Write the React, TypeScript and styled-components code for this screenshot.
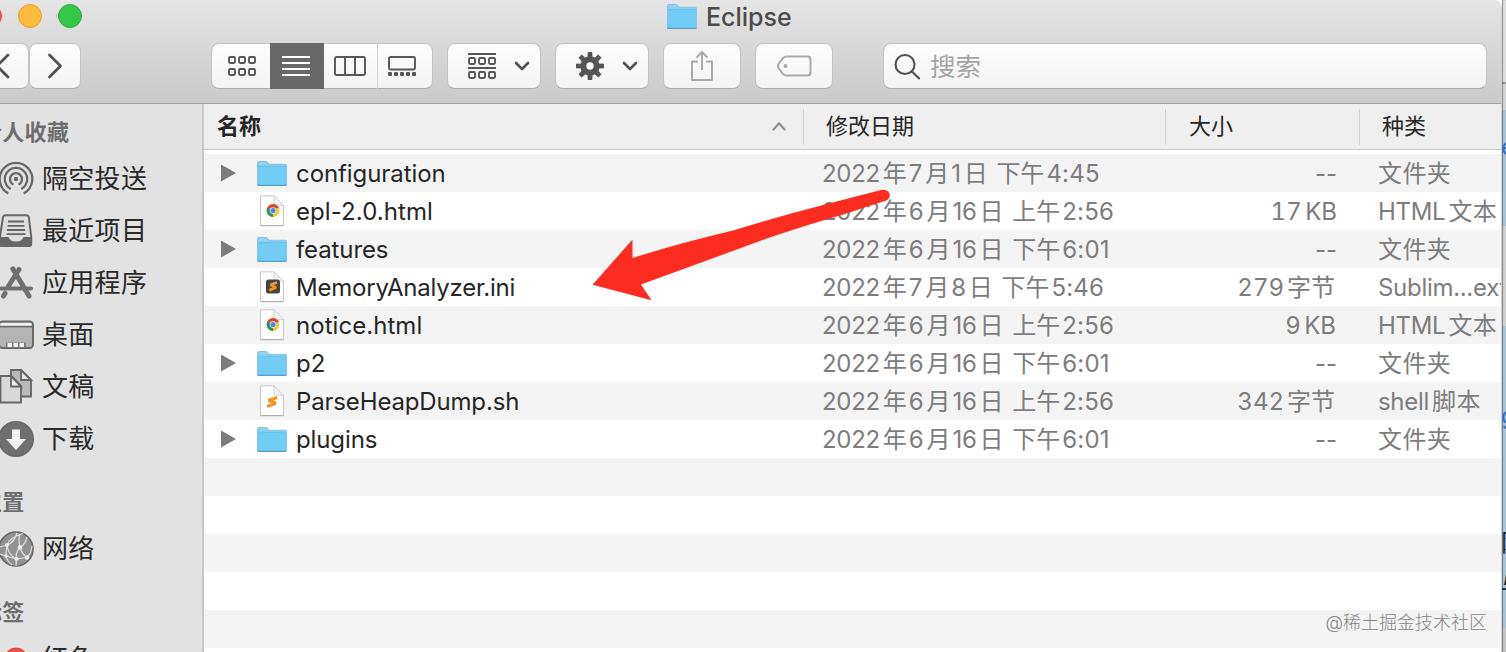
import React from 'react';
import styled, { createGlobalStyle } from 'styled-components';

const GlobalStyle = createGlobalStyle`
  * { box-sizing: border-box; }
  body { margin: 0; overflow: hidden; }
`;

const Desktop = styled.div`
  position: relative;
  display: flex;
  width: 1506px;
  height: 652px;
  overflow: hidden;
  font-family: Inter, 'Noto Sans CJK SC', sans-serif;
  color: #262626;
`;

const Window = styled.div`
  display: flex;
  flex-direction: column;
  width: 1502px;
  flex: none;
  height: 652px;
  overflow: hidden;
  border-top-right-radius: 8px;
  border-right: 1px solid #d2d2d2;
`;

const Behind = styled.div`
  width: 4px;
  height: 652px;
  overflow: hidden;
  white-space: nowrap;
  background: linear-gradient(#dedede 0 82px, #9a9a9a 82px 84px, #d4d4d4 84px 110px, #a9c3d6 110px 226px, #cfcfcf 226px 326px, #a9c3d9 326px 628px, #c4c4c4 628px);
  box-shadow: inset 1px 0 1px rgba(0, 0, 0, 0.35);
`;

const Fragment = styled.div<{ $gap: number; $color: string; $shift: number }>`
  margin-top: ${p => p.$gap}px;
  margin-left: ${p => p.$shift}px;
  height: 30px;
  line-height: 30px;
  font-size: 24px;
  color: ${p => p.$color};
`;

const TitleArea = styled.header`
  height: 104px;
  flex: none;
  display: flex;
  flex-direction: column;
  background: linear-gradient(#e5e5e5, #cacaca);
  border-bottom: 1px solid #a2a2a2;
`;

const TitleBar = styled.div`
  height: 43px;
  display: flex;
  align-items: flex-start;
`;

const Lights = styled.div`
  display: flex;
  gap: 16px;
  margin: 4px 0 0 -22px;
`;

const Light = styled.span<{ $fill: string; $edge: string }>`
  width: 24px;
  height: 24px;
  border-radius: 50%;
  background: ${p => p.$fill};
  border: 1px solid ${p => p.$edge};
`;

const Title = styled.div`
  display: flex;
  align-items: center;
  gap: 9px;
  height: 33px;
  margin-left: 585px;
  font-size: 25px;
  font-weight: 500;
  letter-spacing: 0;
  color: #4b4b4b;
`;

const Toolbar = styled.div`
  display: flex;
  align-items: center;
  height: 46px;
`;

const Button = styled.div<{ $w: number; $ml?: number }>`
  width: ${p => p.$w}px;
  height: 46px;
  margin-left: ${p => p.$ml ?? 0}px;
  display: flex;
  flex: none;
  align-items: center;
  justify-content: center;
  background: linear-gradient(#fdfdfd, #f4f4f4);
  border: 1px solid #c3c3c3;
  border-bottom-color: #adadad;
  border-radius: 8px;
`;

const Segmented = styled.div`
  display: flex;
  height: 46px;
  width: 222px;
  margin-left: 130px;
  border: 1px solid #c3c3c3;
  border-bottom-color: #adadad;
  border-radius: 8px;
  background: linear-gradient(#fdfdfd, #f4f4f4);
`;

const Segment = styled.div<{ $w: number; $active?: boolean; $line?: boolean; $right?: number; $left?: number }>`
  width: ${p => p.$w}px;
  display: flex;
  align-items: center;
  justify-content: center;
  margin: -1px 0;
  padding: 0 ${p => p.$right ?? 0}px 0 ${p => p.$left ?? 0}px;
  background: ${p => (p.$active ? '#686868' : 'transparent')};
  border-left: ${p => (p.$line ? '1px solid #d4d4d4' : '0')};
`;

const Search = styled(Button)`
  justify-content: flex-start;
  padding-left: 10px;
  gap: 9px;
  font-size: 25.5px;
  color: #a5a5a5;
`;

const Placeholder = styled.span`
  padding-bottom: 3px;
`;

const Body = styled.div`
  flex: 1;
  display: flex;
  min-height: 0;
`;

const Sidebar = styled.aside`
  width: 204px;
  flex: none;
  overflow: hidden;
  background: #e2e2e2;
  border-right: 2px solid #c9c9c9;
  white-space: nowrap;
`;

const GroupTitle = styled.div<{ $gap: number }>`
  margin: ${p => p.$gap}px 0 0 -20px;
  height: 41px;
  line-height: 41px;
  font-size: 22px;
  font-weight: 700;
  letter-spacing: 0.3px;
  color: #6d6d6d;
`;

const Place = styled.div`
  display: flex;
  align-items: center;
  gap: 8px;
  height: 52px;
  margin-left: -2px;
  font-size: 26px;
  line-height: 38px;
  letter-spacing: 0.3px;
  color: #2a2a2a;
`;

const Files = styled.main`
  flex: 1;
  min-width: 0;
  background: #fff;
`;

const columns = '599px 362px 194px 1fr';

const HeaderRow = styled.div`
  display: grid;
  grid-template-columns: ${columns};
  align-items: center;
  height: 46px;
  margin-bottom: 4px;
  background: #efefef;
  border-bottom: 1px solid #cccccc;
`;

const HeaderCell = styled.div<{ $pad: number; $bold?: boolean }>`
  display: flex;
  align-items: center;
  justify-content: space-between;
  height: 36px;
  padding: 0 16px 0 ${p => p.$pad}px;
  font-size: 22px;
  font-weight: ${p => (p.$bold ? 700 : 400)};
  border-left: ${p => (p.$bold ? '0' : '1px solid #d2d2d2')};
  white-space: nowrap;
`;

const HeaderLabel = styled.span`
  padding-bottom: 6px;
`;

const Row = styled.div<{ $shade: boolean }>`
  display: grid;
  grid-template-columns: ${columns};
  align-items: center;
  height: 38px;
  line-height: 36px;
  background: ${p => (p.$shade ? '#f4f4f4' : '#fff')};
  white-space: nowrap;
  font-size: 24px;
  color: #7d7d7d;
`;

const NameCell = styled.div`
  display: flex;
  align-items: center;
  height: 38px;
`;

const Disclosure = styled.div`
  width: 37px;
  margin-left: 16px;
  display: flex;
`;

const IconBox = styled.div`
  width: 30px;
  display: flex;
  justify-content: center;
  margin-right: 9px;
`;

const FileName = styled.span<{ $ls: number }>`
  padding-top: 2px;
  color: #262626;
  letter-spacing: ${p => p.$ls}px;
`;

const DateCell = styled.div`
  padding: 2px 0 0 19px;
`;
const SizeCell = styled.div<{ $inset: number; $tabular: boolean }>`
  text-align: right;
  padding: 2px ${p => p.$inset}px 0 0;
  word-spacing: -3px;
  font-variant-numeric: ${p => (p.$tabular ? 'tabular-nums' : 'normal')};
`;
const KindCell = styled.div`
  padding: 2px 0 0 19px;
  overflow: hidden;
`;

const Han = styled.span<{ $lead: boolean; $trail: boolean; $ls: number }>`
  margin-left: ${p => (p.$lead ? 3 : 0)}px;
  margin-right: ${p => (p.$trail ? 2 : 0)}px;
  letter-spacing: ${p => p.$ls}px;
`;
const Latin = styled.span<{ $ls: number }>`
  letter-spacing: ${p => p.$ls}px;
`;

const Arrow = styled.svg`
  position: absolute;
  left: 590px;
  top: 186px;
`;

const Watermark = styled.div`
  position: absolute;
  right: 19px;
  top: 609px;
  line-height: 28px;
  font-size: 18px;
  font-weight: 300;
  letter-spacing: 0px;
  color: #858585;
`;

/* Adds a little air where Chinese and Latin runs meet. */
const Mixed = ({ text, ls = -0.3, hanLs = 0 }: { text: string; ls?: number; hanLs?: number }) => {
  const parts = text.match(/[\u4e00-\u9fff]+|[^\u4e00-\u9fff]+/g) ?? [];
  return (
    <>
      {parts.map((part, i) =>
        /[\u4e00-\u9fff]/.test(part) ? (
          <Han key={i} $ls={hanLs} $lead={i > 0 && parts[i - 1] !== ' '} $trail={i < parts.length - 1 && parts[i + 1] !== ' '}>
            {part}
          </Han>
        ) : (
          <Latin key={i} $ls={part === ' ' ? 2 : part.includes(':') ? 0.2 : ls}>{part}</Latin>
        ),
      )}
    </>
  );
};

const FolderIcon = () => (
  <svg width="30" height="25" viewBox="0 0 30 25">
    <path d="M.5 2Q.5.5 2 .5h7q1 0 1.600.8l1.400 2H28.500q1 0 1 1V23H.5z" fill="#8fd3f3" stroke="#74bce0" strokeWidth=".8" />
    <path d="M.5 5.500h29V23q0 1-1 1h-27q-1 0-1-1z" fill="#72cdf6" />
    <path d="M.8 5.300h28.400" stroke="#62b7e2" strokeWidth=".8" />
    <path d="M.5 23.500q0 .8 1 .8h27q1 0 1-.8" fill="none" stroke="#579fc6" strokeWidth="1.300" />
  </svg>
);

const PageIcon = ({ kind }: { kind: string }) => (
  <svg width="26" height="32" viewBox="0 0 26 32">
    <path d="M1.500.8H15l9.500 9.700V30.500h-23z" fill="#fff" stroke="#c6c6c6" />
    <path d="M15 .8V8q0 2.300 2.300 2.300h7.200z" fill="#f4f4f4" stroke="#cfcfcf" strokeWidth=".9" />
    <path d="M1.500 30.700h23" stroke="#ababab" />
    {kind === 'chrome' && (
      <g>
        <circle cx="14" cy="15.500" r="6.400" fill="#f6c631" />
        <path d="M14 15.500L8.460 12.300A6.400 6.400 0 0 1 19.540 12.300z" fill="#dc4437" />
        <path d="M14 15.500L8.460 12.300A6.400 6.400 0 0 0 14 21.900z" fill="#27985a" />
        <path d="M14 12.300h5.540" stroke="#dc4437" strokeWidth="1.500" />
        <circle cx="14" cy="15.500" r="3.200" fill="#fff" />
        <circle cx="14" cy="15.500" r="2.600" fill="#4b83ee" />
      </g>
    )}
    {kind === 'sublime' && (
      <g>
        <rect x="7" y="8.500" width="14" height="14" rx="2.500" fill="#464646" />
        <path d="M18 11.500L11.500 13.700L17 16.600L10.300 19.200" fill="none" stroke="#f79428" strokeWidth="2.700" strokeLinejoin="bevel" />
      </g>
    )}
    {kind === 'shell' && (
      <path d="M18.200 12.500L9.500 15.200L16.800 18.300L8 21.500" fill="none" stroke="#f79428" strokeWidth="3.200" strokeLinejoin="bevel" />
    )}
  </svg>
);

const grid = (y: number) => [0, 10, 20].map(x => <rect key={`${x}-${y}`} x={x + 1} y={y} width="6" height="6" rx="1.200" />);

const GridIcon = () => (
  <svg width="28" height="20" viewBox="0 0 28 20" fill="none" stroke="#575757" strokeWidth="1.900">{grid(1)}{grid(13)}</svg>
);
const GroupIcon = () => (
  <svg width="28" height="26" viewBox="0 0 28 26" fill="none" stroke="#575757" strokeWidth="1.900">
    <path d="M0 1h28M0 15h28" />{grid(5)}{grid(19)}
  </svg>
);
const ListIcon = () => (
  <svg width="28" height="20" viewBox="0 0 28 20" stroke="#fff" strokeWidth="2"><path d="M0 1h28M0 7h28M0 13h28M0 19h28" /></svg>
);
const ColumnsIcon = () => (
  <svg width="32" height="20" viewBox="0 0 32 20" fill="none" stroke="#575757" strokeWidth="1.900"><rect x="1" y="1" width="30" height="18" rx="1.500" /><path d="M11 1v18M21 1v18" /></svg>
);
const GalleryIcon = () => (
  <svg width="28" height="20" viewBox="0 0 28 20" fill="none" stroke="#575757" strokeWidth="1.900">
    <rect x="1" y="1" width="26" height="12.500" rx="1.500" />
    {[0, 6, 12, 18, 24].map(x => <rect key={x} x={x} y="16" width="4" height="4" rx="1" fill="#575757" stroke="none" />)}
  </svg>
);
const Caret = ({ up }: { up?: boolean }) => (
  <svg width="16" height="10" viewBox="0 0 16 10" fill="none" stroke={up ? '#929292' : '#525252'} strokeWidth={up ? 2.2 : 2.6} strokeLinecap="round" strokeLinejoin="round">
    <path d={up ? 'M2.500 7.500L8 1.200l5.500 6.300' : 'M2 2l6 6 6-6'} />
  </svg>
);
const Gear = () => (
  <svg width="28" height="28" viewBox="-14 -14 28 28" fill="#555">
    {[0, 45, 90, 135, 180, 225, 270, 315].map(a => <path key={a} d="M-2.600-8L-2.200-14H2.200L2.600-8z" transform={`rotate(${a})`} />)}
    <circle r="6.700" fill="none" stroke="#555" strokeWidth="6" />
  </svg>
);

const DropContent = styled.div`
  display: flex;
  align-items: center;
  gap: 18px;
  margin-left: 10px;
`;

const g = '#676767';
const sideIcons: Record<string, React.ReactNode> = {
  airdrop: (
    <g fill="none" stroke={g} strokeWidth="2.300" strokeLinecap="round">
      <circle cx="18" cy="18" r="2.200" fill={g} stroke="none" />
      <path d="M14.500 23A6 6 0 1 1 21.500 23" /><path d="M12 27.500A11.200 11.200 0 1 1 24 27.500" /><path d="M9.500 32A16.300 16.300 0 1 1 26.500 32" />
    </g>
  ),
  recent: (
    <g>
      <path d="M7 2.200H28.500Q30.300 2.200 30.800 4L33.200 23.500V31Q33.200 33 31 33H4Q2 33 2 31V23.500L5 4Q5.500 2.200 7 2.200z" fill="#dedede" stroke={g} strokeWidth="2" />
      <path d="M2 24H10.500Q12 28.500 18 28.500T25.500 24H33.500V31Q33.500 33.500 31 33.500H4Q2 33.500 2 31z" fill={g} />
      <path d="M10 8.500H26M9.500 12.800H26.500M9 17H27M8.500 21.200H27.500" stroke={g} strokeWidth="1.800" />
    </g>
  ),
  apps: (
    <g stroke="#707070" strokeLinecap="round" fill="none">
      <path d="M3 23.500H33" strokeWidth="4" /><path d="M21 4.500L10.500 21" strokeWidth="5" /><path d="M14.800 3.800L31 31" strokeWidth="5" /><path d="M7 28.500L5.500 31" strokeWidth="5" />
    </g>
  ),
  desktop: (
    <g>
      <rect x="1" y="4.500" width="34" height="26.500" rx="3.500" fill="#b4b4b4" stroke={g} strokeWidth="1.900" />
      <path d="M2.500 7.500H33.500" stroke="#f1f1f1" strokeWidth="3" /><path d="M2 9.600H34" stroke={g} strokeWidth="1.600" />
      <path d="M8 28H28" stroke="#7d7d7d" strokeWidth="5" /><path d="M9.500 28H14M15.500 28H20M21.500 28H26" stroke="#f1f1f1" strokeWidth="4" />
    </g>
  ),
  docs: (
    <g stroke={g} strokeWidth="1.900">
      <path d="M13 1H23L33 11V27.500H13z" fill="#b9b9b9" /><path d="M23 1V11H33z" fill="#e4e4e4" />
      <path d="M2.500 7H13.500L23 17V33.500H2.500z" fill="#d9d9d9" /><path d="M13 7V17.500H23z" fill="#ececec" />
    </g>
  ),
  downloads: (
    <g><circle cx="18" cy="18" r="17.200" fill="#707070" stroke={g} strokeWidth="1.600" /><path d="M14 8.500H22V18H28L18 29 8 18H14z" fill="#f3f3f3" /></g>
  ),
  network: (
    <g>
      <circle cx="18" cy="18" r="17" fill="#929292" stroke={g} strokeWidth="1.600" />
      <g fill="none" stroke="#dfdfdf" strokeWidth="1.200">
        <path d="M25 2.500Q12 6 9 14Q8 20 8 25Q9 30 14 34M2 16L9 14Q16 12 19 2M9 14Q10 24 18.500 28L29 26.500M22 16.500Q20 8 22 3M22 16.500Q27 14 29 6M22 16.500Q17 22 18.500 28L18 35M22 16.500Q24 23 29 26.500Q33 23 34 15M2 23L8 25L18.500 28" />
      </g>
      <g fill="#ececec"><circle cx="9" cy="14" r="2" /><circle cx="22" cy="16.500" r="2.300" /><circle cx="8" cy="25" r="1.700" /><circle cx="18.500" cy="28" r="2" /><circle cx="29" cy="26.500" r="2.300" /></g>
    </g>
  ),
  red: <circle cx="18" cy="18.500" r="11.500" fill="#fc4b47" stroke="#dd3d39" />,
};

const SidePlace = ({ icon, label }: { icon: string; label: string }) => (
  <Place><svg width="36" height="36" viewBox="0 0 36 36">{sideIcons[icon]}</svg><span>{label}</span></Place>
);

const files = [
  { icon: 'folder', name: 'configuration', ls: -0.08, date: '2022年7月1日 下午4:45', size: '--', kind: '文件夹' },
  { icon: 'chrome', name: 'epl-2.0.html', ls: 0.08, date: '2022年6月16日 上午2:56', size: '17 KB', kind: 'HTML文本' },
  { icon: 'folder', name: 'features', ls: -0.1, date: '2022年6月16日 下午6:01', size: '--', kind: '文件夹' },
  { icon: 'sublime', name: 'MemoryAnalyzer.ini', ls: -0.22, date: '2022年7月8日 下午5:46', size: '279字节', kind: 'Sublim...ext' },
  { icon: 'chrome', name: 'notice.html', ls: 0.05, date: '2022年6月16日 上午2:56', size: '9 KB', kind: 'HTML文本' },
  { icon: 'folder', name: 'p2', ls: 0, date: '2022年6月16日 下午6:01', size: '--', kind: '文件夹' },
  { icon: 'shell', name: 'ParseHeapDump.sh', ls: -0.16, date: '2022年6月16日 上午2:56', size: '342字节', kind: 'shell脚本' },
  { icon: 'folder', name: 'plugins', ls: -0.12, date: '2022年6月16日 下午6:01', size: '--', kind: '文件夹' },
];

const sizeInset = (size: string) => (size.endsWith('节') ? 24 : size.startsWith('9') ? 23 : 22);

export default function App() {
  return (
    <Desktop>
      <GlobalStyle />
      <Window>
        <TitleArea>
          <TitleBar>
            <Lights>
              <Light $fill="#fc5652" $edge="#df4744" />
              <Light $fill="#fdbc40" $edge="#dfa033" />
              <Light $fill="#34c84a" $edge="#2aad3c" />
            </Lights>
            <Title><FolderIcon />Eclipse</Title>
          </TitleBar>
          <Toolbar>
            <Button $w={52} $ml={-23}>
              <svg width="16" height="26" viewBox="0 0 16 26" fill="none" stroke="#525252" strokeWidth="2.800" strokeLinecap="round"><path d="M13 2L2 13l11 11" /></svg>
            </Button>
            <Button $w={52} $ml={0}>
              <svg width="16" height="26" viewBox="0 0 16 26" fill="none" stroke="#525252" strokeWidth="2.800" strokeLinecap="round" strokeLinejoin="round"><path d="M2.500 2l11 11L2.500 24" /></svg>
            </Button>
            <Segmented>
              <Segment $w={58} $left={2}><GridIcon /></Segment>
              <Segment $w={54} $active $right={2}><ListIcon /></Segment>
              <Segment $w={53} $right={1}><ColumnsIcon /></Segment>
              <Segment $w={55} $line $right={6}><GalleryIcon /></Segment>
            </Segmented>
            <Button $w={94} $ml={14}><DropContent><GroupIcon /><Caret /></DropContent></Button>
            <Button $w={94} $ml={14}><DropContent><Gear /><Caret /></DropContent></Button>
            <Button $w={78} $ml={14}>
              <svg width="24" height="32" viewBox="0 0 24 32" fill="none" stroke="#aaa" strokeWidth="2" strokeLinejoin="round"><path d="M8 11.500H2V30H22V11.500H16M12 20V2M6.500 7.500L12 2l5.500 5.500" /></svg>
            </Button>
            <Button $w={78} $ml={14}>
              <svg width="36" height="22" viewBox="0 0 36 22" fill="none" stroke="#aaa" strokeWidth="2"><path d="M10.500 1.500H31.500Q34.500 1.500 34.500 4.500V17.500Q34.500 20.500 31.500 20.500H10.500Q8.500 20.500 7 19L2.500 13Q1.300 11 2.500 9L7 3Q8.500 1.500 10.500 1.500z" /><circle cx="9.500" cy="11" r="2" fill="#aaa" stroke="none" /></svg>
            </Button>
            <Search $w={604} $ml={50}>
              <svg width="27" height="27" viewBox="0 0 27 27" fill="none" stroke="#505050" strokeWidth="2.100" strokeLinecap="round"><circle cx="11" cy="11.500" r="9.500" /><path d="M18 18.500l7 7" /></svg>
              <Placeholder>搜索</Placeholder>
            </Search>
          </Toolbar>
        </TitleArea>
        <Body>
          <Sidebar>
            <GroupTitle $gap={8}>个人收藏</GroupTitle>
            <SidePlace icon="airdrop" label="隔空投送" />
            <SidePlace icon="recent" label="最近项目" />
            <SidePlace icon="apps" label="应用程序" />
            <SidePlace icon="desktop" label="桌面" />
            <SidePlace icon="docs" label="文稿" />
            <SidePlace icon="downloads" label="下载" />
            <GroupTitle $gap={17}>位置</GroupTitle>
            <SidePlace icon="network" label="网络" />
            <GroupTitle $gap={17}>标签</GroupTitle>
            <SidePlace icon="red" label="红色" />
          </Sidebar>
          <Files>
            <HeaderRow>
              <HeaderCell $pad={13} $bold><HeaderLabel>名称</HeaderLabel><Caret up /></HeaderCell>
              <HeaderCell $pad={22}><HeaderLabel>修改日期</HeaderLabel></HeaderCell>
              <HeaderCell $pad={23}><HeaderLabel>大小</HeaderLabel></HeaderCell>
              <HeaderCell $pad={22}><HeaderLabel>种类</HeaderLabel></HeaderCell>
            </HeaderRow>
            {files.map((f, i) => (
              <Row key={f.name} $shade={i % 2 === 0}>
                <NameCell>
                  <Disclosure>
                    {f.icon === 'folder' && <svg width="17" height="20" viewBox="0 0 17 20"><path d="M1 1.500L16 10 1 18.500z" fill="#7b7b7b" /></svg>}
                  </Disclosure>
                  <IconBox>{f.icon === 'folder' ? <FolderIcon /> : <PageIcon kind={f.icon} />}</IconBox>
                  <FileName $ls={f.ls}>{f.name}</FileName>
                </NameCell>
                <DateCell><Mixed text={f.date} /></DateCell>
                <SizeCell $inset={sizeInset(f.size)} $tabular={f.size !== '--'}><Mixed text={f.size} ls={0} /></SizeCell>
                <KindCell><Mixed text={f.kind} hanLs={0.4} /></KindCell>
              </Row>
            ))}
            {[0, 1, 2, 3, 4, 5].map(i => <Row key={i} $shade={i % 2 === 0} />)}
          </Files>
        </Body>
      </Window>
      <Behind>
        <Fragment $gap={132} $shift={-1} $color="#2f6fc4">e</Fragment>
        <Fragment $gap={239} $shift={-1} $color="#2f6fc4">g</Fragment>
        <Fragment $gap={97} $shift={-1} $color="#1d2733">网</Fragment>
        <Fragment $gap={13} $shift={-2} $color="#1d2733">与</Fragment>
      </Behind>
      <Arrow width="304" height="118" viewBox="590 186 304 118">
        <path d="M592.600 284.700L632.500 239.500V258Q680 243 733 230.500Q780 216 825 204.500L881 190Q887 188.700 889.500 193.500Q890.500 198 887 200.300L848 213Q810 224 771 237L641 284.500L651.500 300.300z" fill="#fc2d20" />
      </Arrow>
      <Watermark>@稀土掘金技术社区</Watermark>
    </Desktop>
  );
}
